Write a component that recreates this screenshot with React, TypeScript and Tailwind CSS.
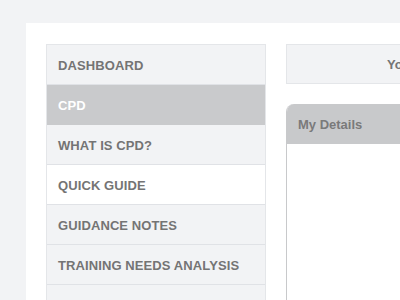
import React from 'react';

export default function App() {
  const items = [
    { label: 'DASHBOARD', active: false, white: false },
    { label: 'CPD', active: true, white: false },
    { label: 'WHAT IS CPD?', active: false, white: false },
    { label: 'QUICK GUIDE', active: false, white: true },
    { label: 'GUIDANCE NOTES', active: false, white: false },
    { label: 'TRAINING NEEDS ANALYSIS', active: false, white: false },
    { label: '', active: false, white: false },
  ];

  return (
    <div
      className="w-[400px] h-[300px] overflow-hidden bg-[#f2f3f5] pt-[23px] pl-[26px]"
      style={{ fontFamily: '"Liberation Sans", Arial, sans-serif' }}
    >
      <div className="w-[540px] h-[400px] bg-white pt-[21px] pl-[20px] flex gap-[20px]">
        {/* Sidebar */}
        <nav className="w-[220px] shrink-0 flex flex-col border-t border-x border-[#e4e6e9]">
          {items.map((item, idx) => (
            <div
              key={idx}
              className={
                'h-[40px] shrink-0 flex items-center pl-[11px] pt-[2px] text-[13px] tracking-[0.1px] font-bold border-b ' +
                (item.active
                  ? 'bg-[#c9cacc] text-white border-[#c9cacc]'
                  : item.white
                  ? 'bg-white text-[#747474] border-[#e0e2e6]'
                  : 'bg-[#f2f3f5] text-[#747474] border-[#e0e2e6]')
              }
            >
              {item.label}
            </div>
          ))}
        </nav>

        {/* Main column */}
        <div className="w-[300px] shrink-0 flex flex-col gap-[20px]">
          <div className="h-[40px] bg-[#f2f3f5] border border-[#e4e6e9] flex items-center pl-[100px] pt-[2px] text-[13px] font-bold text-[#747474]">
            Your CPD Record
          </div>
          <div className="flex-1 rounded-tl-lg overflow-hidden border-l border-[#c8c9cb]">
            <div className="h-[40px] bg-[#c8c9cb] flex items-center pl-[11px] pt-[2px] text-[13px] font-bold text-[#7a7a7a]">
              My Details
            </div>
            <div className="bg-white h-[300px]"></div>
          </div>
        </div>
      </div>
    </div>
  );
}
